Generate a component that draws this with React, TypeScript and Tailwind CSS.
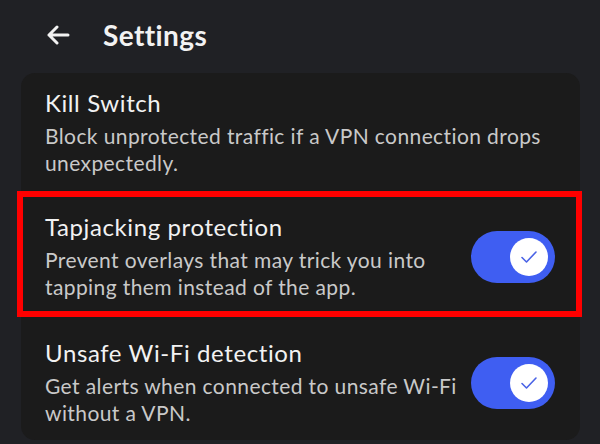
import React from "react";

interface SettingItem {
  id: string;
  title: string;
  description: string;
  toggle: boolean;
}

const items: SettingItem[] = [
  {
    id: "kill",
    title: "Kill Switch",
    description: "Block unprotected traffic if a VPN connection drops unexpectedly.",
    toggle: false,
  },
  {
    id: "tapjacking",
    title: "Tapjacking protection",
    description: "Prevent overlays that may trick you into tapping them instead of the app.",
    toggle: true,
  },
  {
    id: "wifi",
    title: "Unsafe Wi-Fi detection",
    description: "Get alerts when connected to unsafe Wi-Fi without a VPN.",
    toggle: true,
  },
];

const Toggle = () => (
  <div className="w-[84px] h-[52px] shrink-0 rounded-full bg-[#3f5ef2] flex items-center justify-end pr-[7px]">
    <div className="w-[38px] h-[38px] rounded-full bg-white flex items-center justify-center">
      <svg width="18" height="14" viewBox="0 0 18 14" fill="none">
        <path d="M2 7.5 L6.5 12 L16 2" stroke="#4a63e6" strokeWidth="1.6" strokeLinecap="round" strokeLinejoin="round" />
      </svg>
    </div>
  </div>
);

const Row = ({ item }: { item: SettingItem }) => (
  <div className="flex items-center gap-3">
    <div className="flex-1">
      <div className="text-[24px] leading-[28px] tracking-[0.6px] text-[#f2f2f2]">{item.title}</div>
      <div className="mt-[5px] text-[21px] leading-[27px] tracking-[0.4px] text-[#c9c9c9]">{item.description}</div>
    </div>
    {item.toggle && <Toggle />}
  </div>
);

export default function App() {
  return (
    <div
      className="w-[600px] h-[444px] overflow-hidden bg-[#202125]"
      style={{ fontFamily: "Lato, 'Noto Sans', sans-serif" }}
    >
      {/* header */}
      <div className="h-[73px] flex items-center pl-[46px] pb-[3px]">
        <svg width="24" height="20" viewBox="0 0 24 20" fill="none">
          <path d="M22 10 H3 M11 2 L3 10 L11 18" stroke="#f2f2f2" strokeWidth="3" strokeLinecap="round" strokeLinejoin="round" />
        </svg>
        <div className="ml-[33px] text-[28px] font-bold tracking-[0.4px] text-[#f2f2f2] leading-none">Settings</div>
      </div>

      {/* card */}
      <div className="ml-[21px] w-[559px] h-[367px] bg-[#1b1b1b] rounded-[14px]">
        <div className="pt-[16px] pb-[15px] pl-[24px] pr-[25px]">
          <Row item={items[0]} />
        </div>
        <div className="-ml-[4px] -mr-[2px] border-[6px] border-[#ff0000] pt-[16px] pb-[11px] pl-[22px] pr-[21px]">
          <Row item={items[1]} />
        </div>
        <div className="pt-[22px] pb-[14px] pl-[24px] pr-[25px]">
          <Row item={items[2]} />
        </div>
      </div>
    </div>
  );
}
